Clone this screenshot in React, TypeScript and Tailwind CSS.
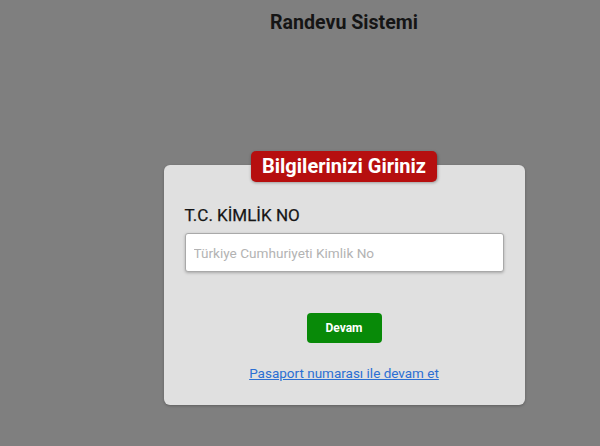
export default function App() {
  return (
    <div className="min-h-[446px] w-full bg-[#7f7f7f] pl-[88px] font-['Roboto',sans-serif]">
      <div className="flex h-[46px] items-center justify-center">
        <h1 className="text-[19.6px] font-bold text-[#151515]">Randevu Sistemi</h1>
      </div>
      <div className="mx-auto mt-[119px] w-[361px]">
        <div className="relative rounded-md bg-[#e0e0e0] px-[21px] pt-[38px] pb-[22px] shadow-[0_1px_3px_rgba(0,0,0,0.25)]">
          <div className="absolute -top-[14px] left-1/2 -translate-x-1/2 whitespace-nowrap rounded-[5px] bg-[#b60f0f] px-[11px] py-[2px] text-[20px] leading-[27px] font-bold text-white shadow-[0_1px_3px_rgba(0,0,0,0.3)]">
            Bilgilerinizi Giriniz
          </div>
          <label className="block text-[17px] leading-6 text-[#161616] [-webkit-text-stroke:0.25px_#161616]">T.C. KİMLİK NO</label>
          <input
            type="text"
            placeholder="Türkiye Cumhuriyeti Kimlik No"
            className="mt-[6px] h-[39px] w-full rounded-[3px] border border-[#a9a9a9] bg-white px-[8px] text-[13.6px] text-[#333] shadow-[0_1px_3px_rgba(0,0,0,0.25)] outline-none placeholder:text-[#b3b3b3]"
          />
          <div className="mt-[41px] flex justify-center">
            <button className="h-[30px] w-[75px] rounded-[4px] bg-[#088a08] text-[12px] font-bold text-white">
              Devam
            </button>
          </div>
          <div className="mt-[20px] text-center leading-5">
            <a href="#" className="text-[13.5px] leading-5 text-[#2b6fd3] underline">
              Pasaport numarası ile devam et
            </a>
          </div>
        </div>
      </div>
    </div>
  );
}
